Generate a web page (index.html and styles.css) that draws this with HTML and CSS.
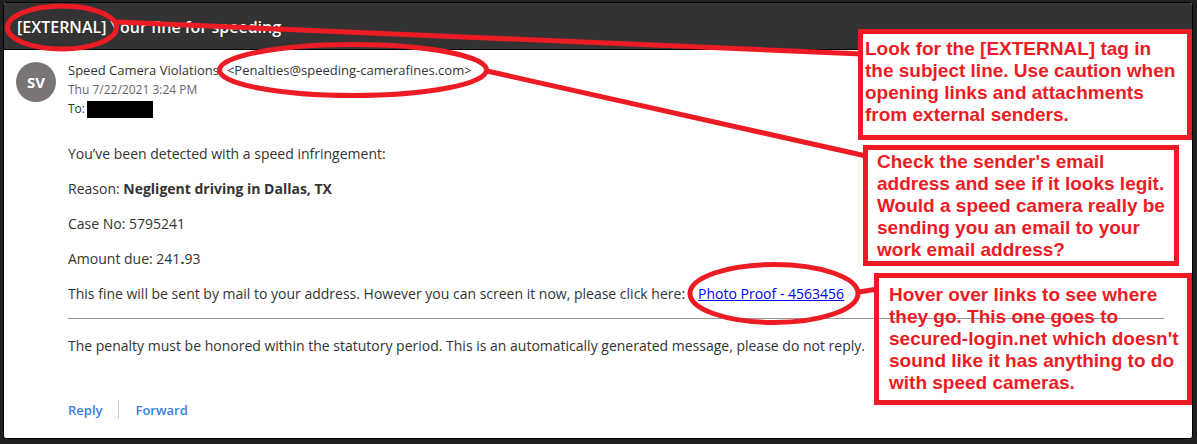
FILE: index.html
```html
<!DOCTYPE html>
<html lang="en">
<head>
<meta charset="utf-8">
<title>Your fine for speeding</title>
<link rel="stylesheet" href="styles.css">
</head>
<body>
<main class="mail">
  <header class="subject"><h1 class="subject-text">[EXTERNAL] Your fine for speeding</h1></header>
  <article class="message">
    <div class="avatar">SV</div>
    <div class="content">
      <div class="sender"><span>Speed Camera Violations</span><span>&lt;Penalties@speeding-camerafines.com&gt;</span></div>
      <div class="date">Thu 7/22/2021 3:24 PM</div>
      <div class="recipient">To: <span class="redacted"></span></div>
      <div class="body">
        <p>You’ve been detected with a speed infringement:</p>
        <p>Reason: <strong>Negligent driving in Dallas, TX</strong></p>
        <p>Case No: 5795241</p>
        <p>Amount due: 241<b>.</b>93</p>
        <p class="proof"><span>This fine will be sent by mail to your address. However you can screen it now, please click here:</span><a href="#proof">Photo Proof - 4563456</a></p>
        <hr>
        <p>The penalty must be honored within the statutory period. This is an automatically generated message, please do not reply.</p>
      </div>
      <div class="actions">
        <button type="button">Reply</button>
        <button type="button">Forward</button>
      </div>
    </div>
  </article>
</main>
<svg class="marks" width="1197" height="444" viewBox="0 0 1197 444" aria-hidden="true">
  <ellipse cx="62" cy="27.5" rx="54.5" ry="21.5"/>
  <path d="M117 22L862 54"/>
  <ellipse cx="353" cy="70" rx="133.5" ry="25.5"/>
  <path d="M487 71L866 156"/>
  <ellipse cx="774" cy="293.5" rx="84" ry="29"/>
  <path d="M859 292L878 289"/>
</svg>
<aside class="note note-subject">Look for the [EXTERNAL] tag in<br>the subject line. Use caution when<br>opening links and attachments<br>from external senders.</aside>
<aside class="note note-sender">Check the sender's email<br>address and see if it looks legit.<br>Would a speed camera really be<br>sending you an email to your<br>work email address?</aside>
<aside class="note note-link">Hover over links to see where<br>they go. This one goes to<br>secured-login.net which doesn't<br>sound like it has anything to do<br>with speed cameras.</aside>
</body>
</html>
```

FILE: styles.css
```css
* { box-sizing: border-box; }

body {
  margin: 0;
  padding: 2px 4px 5px 3px;
  position: relative;
  background: #202020;
  color: #333;
  font-family: "Open Sans", "Noto Sans", sans-serif;
  font-size: 14px;
  line-height: 20px;
}

.mail {
  background: #fff;
  border: 1px solid #000;
  border-radius: 3px;
  overflow: hidden;
}

.subject {
  padding: 12px 13px 10px;
  background: #333;
  border-bottom: 1px solid #000;
}

.subject-text {
  margin: 0;
  color: #fff;
  font-size: 16px;
  font-weight: 600;
  line-height: 24px;
}

.message {
  display: flex;
  gap: 12px;
  padding: 10px 28px 19px 12px;
}

.avatar {
  flex: none;
  display: grid;
  place-items: center;
  width: 40px;
  height: 40px;
  margin-top: 2px;
  border-radius: 50%;
  background: #7a7574;
  color: #fff;
  font-size: 15px;
  font-weight: 700;
}

.content { flex: 1; min-width: 0; }

.sender { display: flex; gap: 8px; font-size: 13px; }

.date { font-size: 12px; color: #666; }

.recipient {
  display: flex;
  align-items: center;
  gap: 2px;
  height: 18px;
  font-size: 12px;
}

.redacted { width: 66px; height: 17px; background: #000; }

.body { padding-top: 26px; }

.body p { margin: 0 0 15px; }

.body hr {
  margin: 0 0 17px;
  border: 0;
  border-top: 1px solid #999;
}

.body .proof {
  display: flex;
  gap: 13px;
  margin-bottom: 14px;
}

.body a { color: #00f; }

.actions { display: flex; padding-top: 30px; }

.actions button {
  padding: 0 16px 0 0;
  border: 0;
  background: none;
  color: #3b7de0;
  font: 600 13px/18px "Open Sans", "Noto Sans", sans-serif;
}

.actions button + button {
  padding-left: 16px;
  border-left: 1px solid #ccc;
}

/* Annotation layer over the message */
.marks {
  position: absolute;
  top: 0;
  left: 0;
  fill: none;
  stroke: #ed1c24;
  stroke-width: 5;
}

.note {
  position: absolute;
  border: 5px solid #ed1c24;
  color: #ed1c24;
  font: bold 19px/22px "Liberation Sans", Arial, sans-serif;
  white-space: nowrap;
}

.note-subject {
  top: 29px;
  left: 858px;
  width: 334px;
  padding: 4px 2px 9px;
  background: #fff;
}

.note-sender {
  top: 145px;
  left: 863px;
  width: 316px;
  padding: 1px 9px 0;
  background: #fff;
}

.note-link {
  top: 273px;
  left: 874px;
  width: 318px;
  padding: 6px 10px;
}
```
